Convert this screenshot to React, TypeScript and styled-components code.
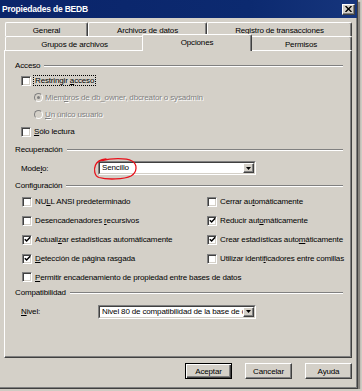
import React from "react";
import styled, { createGlobalStyle, css } from "styled-components";

const FONT = `"Liberation Sans", Arial, sans-serif`;
const FACE = "#d4d0c8";
const SHADOW = "#808080";
const DARK = "#404040";

const GlobalStyle = createGlobalStyle`
  html, body { margin: 0; padding: 0; background: #cfcbc3; }
  body { font-family: ${FONT}; font-size: 8px; letter-spacing: -0.15px; color: #000; }
  * { box-sizing: border-box; }
`;

const Window = styled.div`
  width: 358px;
  height: 389px;
  background: ${FACE};
  border-right: 1px solid ${DARK};
  border-bottom: 1px solid ${DARK};
  box-shadow: inset -1px -1px 0 ${SHADOW}, 2px 2px 1px rgba(0, 0, 0, 0.35);
  display: flex;
  flex-direction: column;
`;

const TitleBar = styled.div`
  height: 18px;
  flex: none;
  background: linear-gradient(to right, #0a246a 0%, #0c2a70 70%, #16357c 100%);
  display: flex;
  align-items: center;
  justify-content: space-between;
  padding: 0 2px 0 2px;
`;

const TitleText = styled.span`
  color: #fff;
  font-weight: bold;
  font-size: 8.5px;
  letter-spacing: -0.2px;
  white-space: nowrap;
`;

const CloseButton = styled.span`
  width: 13px;
  height: 11px;
  background: ${FACE};
  border-top: 1px solid #fff;
  border-left: 1px solid #fff;
  border-right: 1px solid ${DARK};
  border-bottom: 1px solid ${DARK};
  box-shadow: inset -1px -1px 0 ${SHADOW};
  display: flex;
  align-items: center;
  justify-content: center;
`;

const Body = styled.div`
  flex: 1;
  display: flex;
  flex-direction: column;
  padding: 4px 5px 0 4px;
`;

const TabRow = styled.div`
  display: flex;
  height: 14px;
  padding-left: 1px;
  align-items: flex-start;
`;

const Tab = styled.div<{ $w: number; $active?: boolean }>`
  width: ${(p) => p.$w}px;
  height: 14px;
  flex: none;
  display: flex;
  align-items: center;
  justify-content: center;
  background: ${FACE};
  border-top: 1px solid #fff;
  border-left: 1px solid #fff;
  border-right: 1px solid ${DARK};
  box-shadow: inset -1px 0 0 ${SHADOW};
  border-radius: 2px 2px 0 0;
  white-space: nowrap;
  padding-top: 1px;
  ${(p) =>
    p.$active &&
    css`
      position: relative;
      z-index: 1;
      height: 17px;
      margin: -2px -2px 0 -2px;
      padding-top: 0;
      padding-bottom: 1px;
    `}
`;

const Panel = styled.div`
  height: 308px;
  flex: none;
  border-top: 1px solid #fff;
  border-left: 1px solid #fff;
  border-right: 1px solid ${DARK};
  border-bottom: 1px solid ${DARK};
  box-shadow: inset -1px -1px 0 ${SHADOW};
  display: flex;
  flex-direction: column;
  padding-top: 8px;
`;

const GroupHeader = styled.div<{ $mt?: number }>`
  display: flex;
  align-items: center;
  height: 13px;
  padding-left: 10px;
  margin-right: 8px;
  margin-top: ${(p) => p.$mt ?? 0}px;
  gap: 4px;
  white-space: nowrap;
`;

const GroupLine = styled.span`
  flex: 1;
  height: 2px;
  border-top: 1px solid ${SHADOW};
  border-bottom: 1px solid #fff;
`;

const CheckRow = styled.div<{ $indent?: number; $gap?: number }>`
  display: flex;
  align-items: center;
  height: 17px;
  padding-left: ${(p) => p.$indent ?? 16}px;
  gap: ${(p) => p.$gap ?? 3}px;
  white-space: nowrap;
`;

const Box = styled.span`
  width: 10px;
  height: 10px;
  flex: none;
  background: #fff;
  border-top: 1px solid ${SHADOW};
  border-left: 1px solid ${SHADOW};
  border-right: 1px solid #fff;
  border-bottom: 1px solid #fff;
  box-shadow: inset 1px 1px 0 ${DARK}, inset -1px -1px 0 ${FACE};
  display: flex;
  align-items: center;
  justify-content: center;
`;

const RadioDot = styled.span<{ $on?: boolean }>`
  width: 9px;
  height: 9px;
  flex: none;
  border-radius: 50%;
  background: ${FACE};
  border: 1px solid;
  border-color: ${SHADOW} #fff #fff ${SHADOW};
  display: flex;
  align-items: center;
  justify-content: center;
  &::after {
    content: "";
    width: 3px;
    height: 3px;
    border-radius: 50%;
    background: ${(p) => (p.$on ? SHADOW : "transparent")};
  }
`;

const Label = styled.span<{ $focus?: boolean; $disabled?: boolean }>`
  white-space: nowrap;
  ${(p) =>
    p.$focus &&
    css`
      outline: 1px dotted #000;
      outline-offset: 0px;
      padding: 0 1px;
    `}
  ${(p) =>
    p.$disabled &&
    css`
      color: ${SHADOW};
      text-shadow: 1px 1px 0 #fff;
    `}
`;

const U = styled.span`
  text-decoration: underline;
`;

const FormRow = styled.div<{ $h: number; $mt?: number }>`
  display: flex;
  align-items: center;
  height: ${(p) => p.$h}px;
  margin-top: ${(p) => p.$mt ?? 0}px;
  padding-left: 16px;
`;

const FieldLabel = styled.span`
  width: 77px;
  flex: none;
  white-space: nowrap;
`;

const Combo = styled.div`
  position: relative;
  width: 158px;
  height: 14px;
  border-top: 1px solid ${SHADOW};
  border-left: 1px solid ${SHADOW};
  border-right: 1px solid #fff;
  border-bottom: 1px solid #fff;
`;

const ComboInner = styled.div`
  height: 100%;
  display: flex;
  background: #fff;
  border-top: 1px solid ${DARK};
  border-left: 1px solid ${DARK};
  border-right: 1px solid ${FACE};
  border-bottom: 1px solid ${FACE};
`;

const ComboText = styled.span`
  flex: 1;
  overflow: hidden;
  white-space: nowrap;
  padding-left: 2px;
  line-height: 10px;
`;

const ComboButton = styled.span`
  width: 11px;
  flex: none;
  background: ${FACE};
  border-top: 1px solid #fff;
  border-left: 1px solid #fff;
  border-right: 1px solid ${DARK};
  border-bottom: 1px solid ${DARK};
  box-shadow: inset -1px -1px 0 ${SHADOW};
  display: flex;
  align-items: center;
  justify-content: center;
`;

const Annotation = styled.svg`
  position: absolute;
  left: -6px;
  top: -5px;
  pointer-events: none;
`;

const ConfigGrid = styled.div`
  display: grid;
  grid-template-columns: 185px 1fr;
  grid-template-rows: repeat(4, 19px) 18px;
  padding-left: 17px;
`;

const GridCell = styled.div<{ $span?: boolean }>`
  display: flex;
  align-items: center;
  gap: 3px;
  white-space: nowrap;
  ${(p) =>
    p.$span &&
    css`
      grid-column: 1 / -1;
    `}
`;

const ButtonRow = styled.div`
  display: flex;
  justify-content: flex-end;
  gap: 13px;
  margin-top: 5px;
`;

const Button = styled.div<{ $default?: boolean }>`
  width: 47px;
  height: 16px;
  display: flex;
  align-items: center;
  justify-content: center;
  background: ${FACE};
  ${(p) =>
    p.$default
      ? css`
          border: 1px solid #000;
          box-shadow: inset 1px 1px 0 #fff, inset -1px -1px 0 ${DARK},
            inset -2px -2px 0 ${SHADOW};
        `
      : css`
          border-top: 1px solid #fff;
          border-left: 1px solid #fff;
          border-right: 1px solid ${DARK};
          border-bottom: 1px solid ${DARK};
          box-shadow: inset -1px -1px 0 ${SHADOW};
        `}
`;

const Check = ({ on }: { on?: boolean }) => (
  <Box>
    {on && (
      <svg width="7" height="7" viewBox="0 0 7 7">
        <path d="M0.8 3.2 L2.6 5 L6.2 1.2" stroke="#000" strokeWidth="1.5" fill="none" />
      </svg>
    )}
  </Box>
);

const Arrow = () => (
  <svg width="5" height="3" viewBox="0 0 5 3">
    <path d="M0 0 H5 L2.5 3 Z" fill="#000" />
  </svg>
);

export default function App() {
  return (
    <>
      <GlobalStyle />
      <Window>
        <TitleBar>
          <TitleText>Propiedades de BEDB</TitleText>
          <CloseButton>
            <svg width="7" height="6" viewBox="0 0 7 6">
              <path d="M0.5 0 L6.5 6 M6.5 0 L0.5 6" stroke="#000" strokeWidth="1.4" />
            </svg>
          </CloseButton>
        </TitleBar>
        <Body>
          <TabRow>
            <Tab $w={83}>General</Tab>
            <Tab $w={119}>Archivos de datos</Tab>
            <Tab $w={145}>Registro de transacciones</Tab>
          </TabRow>
          <TabRow>
            <Tab $w={139}>Grupos de archivos</Tab>
            <Tab $w={110} $active>
              Opciones
            </Tab>
            <Tab $w={102}>Permisos</Tab>
          </TabRow>
          <Panel>
            <GroupHeader>
              Acceso
              <GroupLine />
            </GroupHeader>
            <CheckRow>
              <Check />
              <Label $focus>
                Restringir <U>a</U>cceso
              </Label>
            </CheckRow>
            <CheckRow $indent={29} $gap={2}>
              <RadioDot $on />
              <Label $disabled>
                Miem<U>b</U>ros de db_owner, dbcreator o sysadmin
              </Label>
            </CheckRow>
            <CheckRow $indent={29} $gap={2}>
              <RadioDot />
              <Label $disabled>
                <U>U</U>n único usuario
              </Label>
            </CheckRow>
            <CheckRow>
              <Check />
              <Label>
                <U>S</U>ólo lectura
              </Label>
            </CheckRow>

            <GroupHeader $mt={3}>
              Recuperación
              <GroupLine />
            </GroupHeader>
            <FormRow $h={22} $mt={1}>
              <FieldLabel>
                Mode<U>l</U>o:
              </FieldLabel>
              <Combo>
                <ComboInner>
                  <ComboText>Sencillo</ComboText>
                  <ComboButton>
                    <Arrow />
                  </ComboButton>
                </ComboInner>
                <Annotation width="46" height="24" viewBox="0 0 46 24">
                  <path
                    d="M9 3.5 C 18 1.2, 33 0.8, 39 4 C 45 7.5, 44 15.5, 38 19 C 31 22.5, 14 22.8, 6 20.5 C 1 18.8, 0.8 12, 2.5 8 C 4 4.5, 8 2.6, 13 2"
                    stroke="#e8101a"
                    strokeWidth="1.3"
                    fill="none"
                    strokeLinecap="round"
                  />
                </Annotation>
              </Combo>
            </FormRow>

            <GroupHeader>
              Configuración
              <GroupLine />
            </GroupHeader>
            <ConfigGrid>
              <GridCell>
                <Check />
                <span>
                  NU<U>L</U>L ANSI predeterminado
                </span>
              </GridCell>
              <GridCell>
                <Check />
                <span>
                  Cerrar au<U>t</U>omáticamente
                </span>
              </GridCell>
              <GridCell>
                <Check />
                <span>
                  Desencadenadores <U>r</U>ecursivos
                </span>
              </GridCell>
              <GridCell>
                <Check on />
                <span>
                  Reducir aut<U>o</U>máticamente
                </span>
              </GridCell>
              <GridCell>
                <Check on />
                <span>
                  Actuali<U>z</U>ar estadísticas automáticamente
                </span>
              </GridCell>
              <GridCell>
                <Check on />
                <span>
                  Crear estadísticas auto<U>m</U>áticamente
                </span>
              </GridCell>
              <GridCell>
                <Check on />
                <span>
                  <U>D</U>etección de página rasgada
                </span>
              </GridCell>
              <GridCell>
                <Check />
                <span>
                  Utilizar identi<U>f</U>icadores entre comillas
                </span>
              </GridCell>
              <GridCell $span>
                <Check />
                <span>
                  <U>P</U>ermitir encadenamiento de propiedad entre bases de datos
                </span>
              </GridCell>
            </ConfigGrid>

            <GroupHeader>
              Compatibilidad
              <GroupLine />
            </GroupHeader>
            <FormRow $h={25}>
              <FieldLabel>
                <U>N</U>ivel:
              </FieldLabel>
              <Combo>
                <ComboInner>
                  <ComboText>Nivel 80 de compatibilidad de la base de datos</ComboText>
                  <ComboButton>
                    <Arrow />
                  </ComboButton>
                </ComboInner>
              </Combo>
            </FormRow>
          </Panel>
          <ButtonRow>
            <Button $default>Aceptar</Button>
            <Button>Cancelar</Button>
            <Button>Ayuda</Button>
          </ButtonRow>
        </Body>
      </Window>
    </>
  );
}
